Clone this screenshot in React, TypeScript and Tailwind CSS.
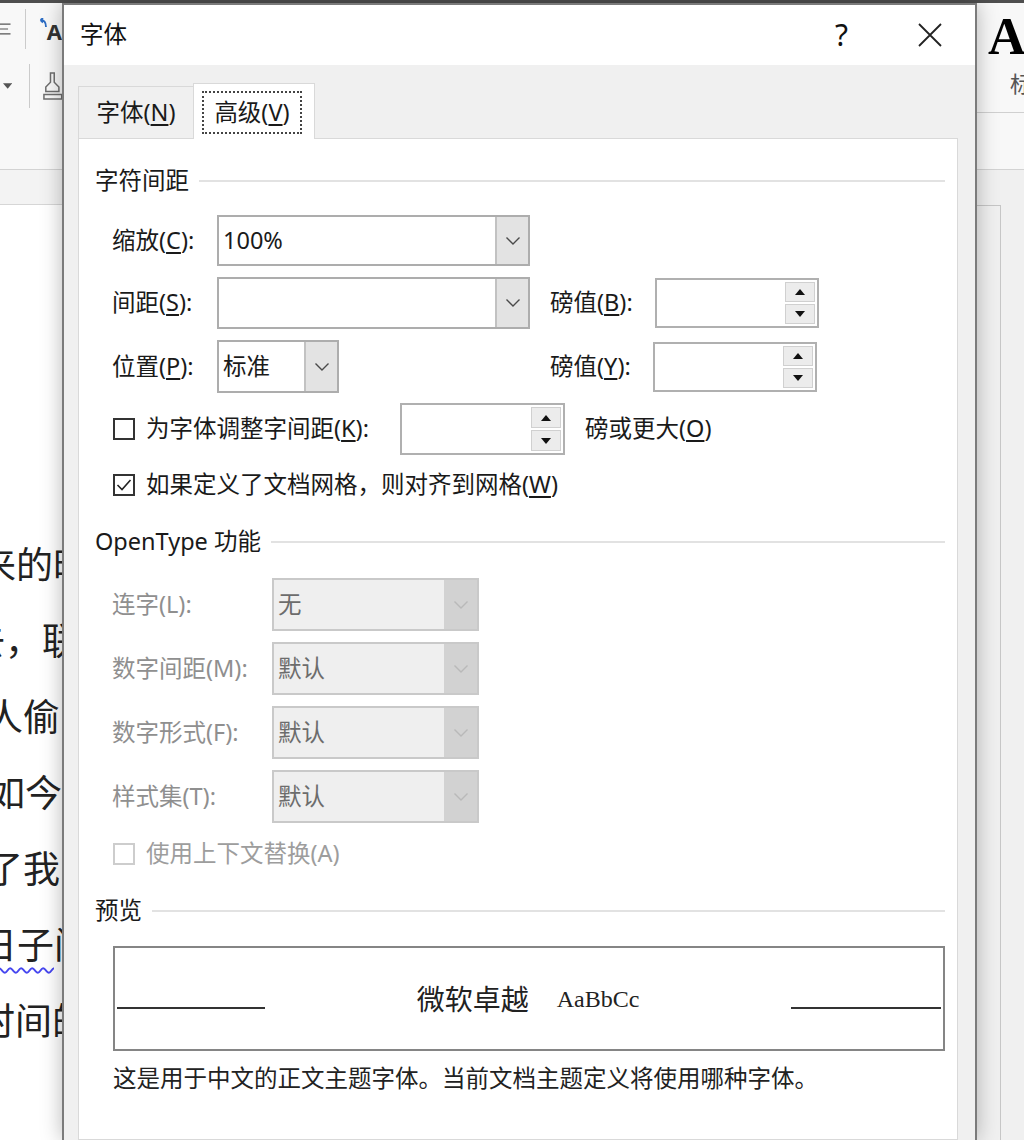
import React from 'react'

const ui = "font-['Noto_Sans','Noto_Sans_CJK_SC',sans-serif]"

function Key({ k }: { k: string }) {
  return <span className="underline decoration-2 underline-offset-[3px]">{k}</span>
}

function Chevron({ color = '#4a4a4a' }: { color?: string }) {
  return (
    <svg width="16" height="10" viewBox="0 0 16 10" fill="none">
      <path d="M1.5 1.5 L8 8 L14.5 1.5" stroke={color} strokeWidth="1.4" />
    </svg>
  )
}

function Combo({ className = '', value = '', disabled = false }: { className?: string; value?: string; disabled?: boolean }) {
  return (
    <div className={`${className} shrink-0 flex border-2 ${disabled ? 'border-[#c9c9c9] bg-[#efefef]' : 'border-[#adadad] bg-white'}`}>
      <div className={`flex-1 flex items-center pl-[4px] ${disabled ? 'text-[#6c6c6c]' : ''}`}>{value}</div>
      {disabled ? (
        <div className="w-[33px] bg-[#d2d2d2] flex items-center justify-center"><Chevron color="#b9b9b9" /></div>
      ) : (
        <div className="w-[33px] bg-[#e3e3e3] border-l-2 border-[#c2c2c2] flex items-center justify-center"><Chevron /></div>
      )}
    </div>
  )
}

function Spinner({ className = '' }: { className?: string }) {
  return (
    <div className={`${className} shrink-0 border-2 border-[#b0b0b0] bg-white flex justify-end p-[2px]`}>
      <div className="w-[30px] flex flex-col gap-[2px]">
        <div className="flex-1 bg-[#ececec] border border-[#d0d0d0] flex items-center justify-center">
          <svg width="10" height="6" viewBox="0 0 10 6"><path d="M0 6 L5 0 L10 6 Z" fill="#111" /></svg>
        </div>
        <div className="flex-1 bg-[#ececec] border border-[#d0d0d0] flex items-center justify-center">
          <svg width="10" height="6" viewBox="0 0 10 6"><path d="M0 0 L10 0 L5 6 Z" fill="#111" /></svg>
        </div>
      </div>
    </div>
  )
}

function Checkbox({ checked = false, disabled = false, className = '' }: { checked?: boolean; disabled?: boolean; className?: string }) {
  return (
    <div className={`${className} w-[22px] h-[22px] shrink-0 border-2 bg-white flex items-center justify-center ${disabled ? 'border-[#cdcdcd]' : 'border-[#333333]'}`}>
      {checked && (
        <svg width="18" height="18" viewBox="0 0 18 18" fill="none">
          <path d="M2.5 9 L7 13.5 L15.5 4" stroke="#222" strokeWidth="1.6" />
        </svg>
      )}
    </div>
  )
}

function Heading({ children }: { children: React.ReactNode }) {
  return (
    <div className="h-[30px] flex items-center">
      <span className="whitespace-nowrap">{children}</span>
      <div className="flex-1 h-[2px] bg-[#e2e2e2] ml-[10px]" />
    </div>
  )
}

// document text behind the dialog, only its left edge shows
const docLines = [
  { text: '来的时', ml: '-ml-[21px]' },
  { text: '去，联', ml: '-ml-[32px]' },
  { text: '人偷', ml: '-ml-[14px]' },
  { text: '如今', ml: '-ml-[12px]' },
  { text: '了我', ml: '-ml-[14px]' },
]

function LeftStrip() {
  return (
    <div className="w-[62px] shrink-0 overflow-hidden flex flex-col bg-white">
      <div className="h-[167px] shrink-0 bg-[#f8f8f8] border-b border-[#d3d3d3] flex flex-col">
        <div className="h-[52px] flex items-center">
          <svg width="18" height="22" viewBox="0 0 18 22" fill="none">
            <path d="M0 3 H17 M0 11 H13 M0 19 H17" stroke="#555" strokeWidth="2" />
          </svg>
          <div className="ml-[14px] w-px h-[40px] bg-[#cbcbcb]" />
          <div className="ml-[13px] flex items-start">
            <svg width="8" height="10" viewBox="0 0 8 10" fill="none" className="mt-[2px]">
              <path d="M7 9 C7 4 5 2 1.5 2 M1.5 2 L4 0 M1.5 2 L4 4.5" stroke="#2b6cc4" strokeWidth="1.8" />
            </svg>
            <span className="text-[22px] leading-none font-bold text-[#333] mt-[4px]">A</span>
          </div>
        </div>
        <div className="h-[62px] flex items-center">
          <svg width="10" height="6" viewBox="0 0 10 6" className="ml-[3px]"><path d="M0 0 L10 0 L5 6 Z" fill="#555" /></svg>
          <div className="ml-[17px] w-px h-[44px] bg-[#cbcbcb]" />
          <svg width="20" height="32" viewBox="0 0 20 32" fill="none" className="ml-[13px]">
            <path d="M8 2 L12 2 L12 12 L17 17 L17 22 L3 22 L3 17 L8 12 Z" stroke="#6e6e6e" strokeWidth="1.6" />
            <path d="M1 25 H20 V30 H1 Z" stroke="#6e6e6e" strokeWidth="1.6" />
          </svg>
        </div>
      </div>
      <div className="h-[35px] shrink-0 bg-[#f3f3f3] border-b border-[#d6d6d6]" />
      <div className="flex-1 pt-[320px] text-[37px] leading-[76px] text-[#222] font-['Noto_Sans_CJK_SC',sans-serif] whitespace-nowrap">
        {docLines.map((l) => (
          <div key={l.text} className={l.ml}>{l.text}</div>
        ))}
        <div className="-ml-[20px]">
          <span className="underline decoration-wavy decoration-2 decoration-[#4646f0] underline-offset-[8px]">日子</span>间
        </div>
        <div className="-ml-[22px]">时间的</div>
      </div>
    </div>
  )
}

function RightStrip() {
  return (
    <div className="flex-1 min-w-0 overflow-hidden flex flex-col bg-[#f8f8f8]">
      <div className="h-[110px] shrink-0 border-b border-[#d0d0d0] flex flex-col">
        <span className="ml-[11px] mt-[8px] text-[52px] leading-none font-bold text-black font-['Liberation_Serif',serif]">A</span>
        <span className="ml-[33px] mt-[8px] text-[22px] leading-none text-[#555] font-['Noto_Sans_CJK_SC',sans-serif]">标</span>
      </div>
      <div className="h-[57px] shrink-0 border-b border-[#d3d3d3]" />
      <div className="flex-1 flex bg-[#f0f0f0]">
        <div className="w-[24px] pt-[35px]">
          <div className="h-full border-t border-r border-[#c6c6c6]" />
        </div>
      </div>
    </div>
  )
}

function Dialog() {
  return (
    <div className="relative z-10 w-[915px] shrink-0 flex flex-col border-x-2 border-t-2 border-[#7b7b7b] bg-[#f0f0f0] shadow-[0_0_20px_rgba(0,0,0,0.28)]">
      <div className="h-[60px] shrink-0 bg-white flex items-center pl-[16px] pr-[33px] text-[#111]">
        <span className="text-[23.5px]">字体</span>
        <span className="ml-auto text-[30px] leading-none">?</span>
        <svg className="ml-[70px]" width="24" height="24" viewBox="0 0 24 24" fill="none">
          <path d="M1 1 L23 23 M23 1 L1 23" stroke="#222" strokeWidth="1.8" />
        </svg>
      </div>

      <div className="flex-1 flex flex-col pt-[18px] pl-[14px] pr-[17px] text-[23.5px] text-[#1a1a1a]">
        <div className="flex items-end h-[55px] shrink-0">
          <div className="w-[115px] h-[52px] border-t border-l border-[#d9d9d9] flex items-center justify-center">
            字体(<Key k="N" />)
          </div>
          <div className="w-[122px] h-[56px] -mb-px relative z-10 bg-white border border-b-0 border-[#d9d9d9] pl-[8px] pt-[7px]">
            <div className="w-[100px] h-[43px] border-2 border-dotted border-[#444] flex items-center justify-center">
              高级(<Key k="V" />)
            </div>
          </div>
        </div>

        <div className="flex-1 bg-white border border-[#d9d9d9] pt-[27px] pl-[16px] pr-[12px]">
          <Heading>字符间距</Heading>

          <div className="ml-[17px] mt-[19px] h-[51px] flex items-center">
            <span className="w-[105px] shrink-0">缩放(<Key k="C" />):</span>
            <Combo className="w-[313px] h-full" value="100%" />
          </div>

          <div className="ml-[17px] mt-[11px] h-[52px] flex items-center">
            <span className="w-[105px] shrink-0">间距(<Key k="S" />):</span>
            <Combo className="w-[313px] h-full" />
            <span className="ml-[20px] w-[105px] shrink-0">磅值(<Key k="B" />):</span>
            <Spinner className="w-[164px] h-[50px]" />
          </div>

          <div className="ml-[17px] mt-[11px] h-[53px] flex items-center">
            <span className="w-[105px] shrink-0">位置(<Key k="P" />):</span>
            <Combo className="w-[122px] h-full" value="标准" />
            <span className="ml-[211px] w-[103px] shrink-0">磅值(<Key k="Y" />):</span>
            <Spinner className="w-[164px] h-[50px]" />
          </div>

          <div className="ml-[17px] mt-[10px] h-[52px] flex items-center">
            <Checkbox className="ml-[1px]" />
            <span className="ml-[11px] w-[254px] shrink-0 whitespace-nowrap">为字体调整字间距(<Key k="K" />):</span>
            <Spinner className="w-[165px] h-[52px]" />
            <span className="ml-[20px] whitespace-nowrap">磅或更大(<Key k="O" />)</span>
          </div>

          <div className="ml-[17px] mt-[15px] h-[30px] flex items-center">
            <Checkbox className="ml-[1px]" checked />
            <span className="ml-[11px] whitespace-nowrap">如果定义了文档网格，则对齐到网格(<Key k="W" />)</span>
          </div>

          <div className="mt-[27px]">
            <Heading>OpenType 功能</Heading>
          </div>

          {[
            ['连字(L):', '无', 'mt-[21px]'],
            ['数字间距(M):', '默认', 'mt-[11px]'],
            ['数字形式(F):', '默认', 'mt-[11px]'],
            ['样式集(T):', '默认', 'mt-[11px]'],
          ].map(([label, value, mt]) => (
            <div key={label} className={`ml-[17px] ${mt} h-[53px] flex items-center`}>
              <span className="w-[160px] shrink-0 text-[#8f8f8f] whitespace-nowrap">{label}</span>
              <Combo className="w-[207px] h-full" value={value} disabled />
            </div>
          ))}

          <div className="ml-[17px] mt-[16px] h-[30px] flex items-center">
            <Checkbox className="ml-[1px]" disabled />
            <span className="ml-[11px] text-[#9d9d9d] whitespace-nowrap">使用上下文替换(A)</span>
          </div>

          <div className="mt-[27px]">
            <Heading>预览</Heading>
          </div>

          <div className="mt-[20px] ml-[18px] h-[105px] border-2 border-[#858585] flex items-center justify-between px-[2px]">
            <div className="w-[148px] h-[2px] bg-[#333] mt-[19px]" />
            <div className="flex items-center text-[#222]">
              <span className="text-[28px]">微软卓越</span>
              <span className="ml-[28px] text-[24px] font-['Liberation_Serif',serif]">AaBbCc</span>
            </div>
            <div className="w-[150px] h-[2px] bg-[#333] mt-[19px]" />
          </div>

          <div className="ml-[18px] mt-[13px] h-[30px] flex items-center whitespace-nowrap text-[#222]">
            这是用于中文的正文主题字体。当前文档主题定义将使用哪种字体。
          </div>
        </div>
      </div>
    </div>
  )
}

export default function App() {
  return (
    <div className={`w-[1024px] h-[1140px] overflow-hidden bg-white flex flex-col ${ui}`}>
      <div className="h-[3px] shrink-0 bg-[#4f4f4f]" />
      <div className="flex flex-1 min-h-0">
        <LeftStrip />
        <Dialog />
        <RightStrip />
      </div>
    </div>
  )
}
